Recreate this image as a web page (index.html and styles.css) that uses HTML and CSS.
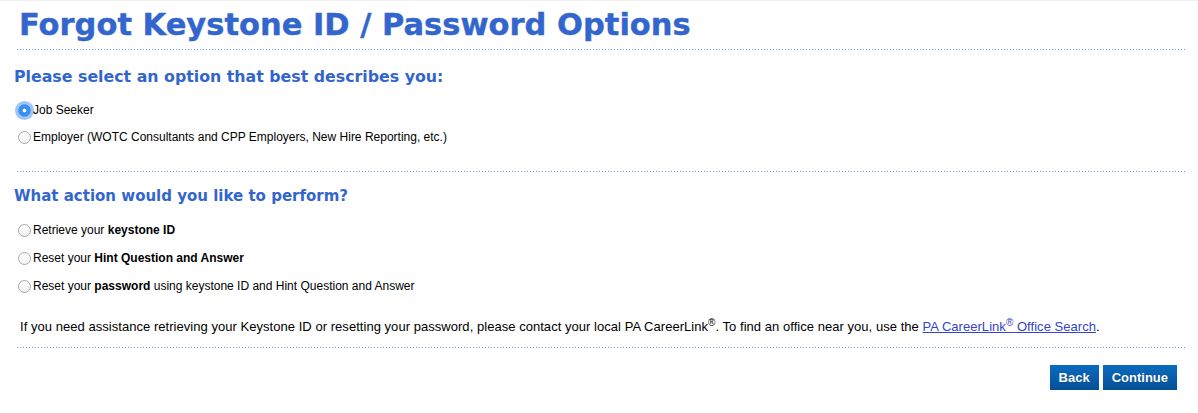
FILE: index.html
```html
<!DOCTYPE html>
<html>
<head>
<meta charset="utf-8">
<link rel="stylesheet" href="styles.css">
</head>
<body>
<div class="page">
  <h1 class="title">Forgot Keystone ID / Password Options</h1>
  <div class="rule"></div>
  <h2 class="section-title">Please select an option that best describes you:</h2>
  <div class="options options-first">
    <label class="option"><span class="radio checked"></span>Job Seeker</label>
    <label class="option"><span class="radio"></span>Employer (WOTC Consultants and CPP Employers, New Hire Reporting, etc.)</label>
  </div>
  <div class="rule rule-mid"></div>
  <h2 class="section-title section-title-sm">What action would you like to perform?</h2>
  <div class="options">
    <label class="option"><span class="radio"></span>Retrieve your&nbsp;<b>keystone ID</b></label>
    <label class="option"><span class="radio"></span>Reset your&nbsp;<b>Hint Question and Answer</b></label>
    <label class="option"><span class="radio"></span>Reset your&nbsp;<b>password</b>&nbsp;using keystone ID and Hint Question and Answer</label>
  </div>
  <p class="note">If you need assistance retrieving your Keystone ID or resetting your password, please contact your local PA CareerLink<sup>®</sup>. To find an office near you, use the <a href="#">PA CareerLink<sup>®</sup> Office Search</a>.</p>
  <div class="rule rule-bottom"></div>
  <div class="actions">
    <button class="btn">Back</button>
    <button class="btn">Continue</button>
  </div>
</div>
</body>
</html>
```

FILE: styles.css
```css
html, body {
  margin: 0;
  padding: 0;
  background: #ffffff;
}
body {
  font-family: "Liberation Sans", Arial, sans-serif;
  font-size: 12px;
  color: #000;
  border-top: 1px solid #f0f0f0;
}
.page {
  width: 1198px;
  box-sizing: border-box;
  padding: 0 13px 0 14px;
}
.title {
  margin: 0;
  padding: 5px 0 0 5px;
  font-family: "DejaVu Sans", Verdana, sans-serif;
  font-weight: bold;
  font-size: 30.5px;
  line-height: 38px;
  color: #3366cc;
  -webkit-text-stroke: 0.4px #3366cc;
}
.rule {
  height: 1px;
  margin: 5px 0 0 3px;
  background: repeating-linear-gradient(to right, #6f9fdc 0, #6f9fdc 1px, transparent 1px, transparent 3px);
}
.section-title {
  margin: 17px 0 0 0;
  font-family: "DejaVu Sans", Verdana, sans-serif;
  font-weight: bold;
  font-size: 15.8px;
  line-height: 20px;
  color: #3366cc;
}
.section-title-sm {
  margin-top: 14px;
  font-size: 15px;
}
.options {
  display: flex;
  flex-direction: column;
  gap: 14px;
  margin-top: 17px;
  padding-left: 4px;
}
.options-first {
  gap: 13px;
  margin-top: 16px;
}
.option {
  display: flex;
  align-items: center;
  height: 14px;
  line-height: 14px;
}
.option b {
  font-weight: bold;
}
.radio {
  width: 11px;
  height: 11px;
  border: 1px solid #a8a8a8;
  border-radius: 50%;
  background: linear-gradient(#ffffff, #f2f2f2);
  margin-right: 2px;
  box-sizing: content-box;
  flex: none;
}
.radio.checked {
  border-color: #3a8ff0;
  background: radial-gradient(circle, #ffffff 0, #ffffff 1.6px, #3b8ff3 2.2px, #3b8ff3 100%);
  box-shadow: 0 0 0 3px rgba(80, 150, 240, 0.55);
}
.rule-mid {
  margin-top: 27px;
}
.note {
  margin: 26px 0 0 6px;
  font-size: 13px;
  line-height: 15px;
  letter-spacing: 0.04px;
}
.note sup {
  font-size: 10px;
  line-height: 0;
  vertical-align: 5px;
}
.note a {
  color: #3543c9;
  text-decoration: underline;
}
.rule-bottom {
  margin-top: 13px;
}
.actions {
  display: flex;
  justify-content: flex-end;
  gap: 4px;
  margin-top: 17px;
  padding-right: 8px;
}
.btn {
  font-family: "Liberation Sans", Arial, sans-serif;
  font-weight: bold;
  font-size: 13px;
  color: #ffffff;
  border: none;
  height: 25px;
  padding: 0 9px;
  background: linear-gradient(#0b6cc0, #064f95);
  border-radius: 0;
  text-shadow: 0 0 1px rgba(0, 0, 0, 0.4);
}
```
